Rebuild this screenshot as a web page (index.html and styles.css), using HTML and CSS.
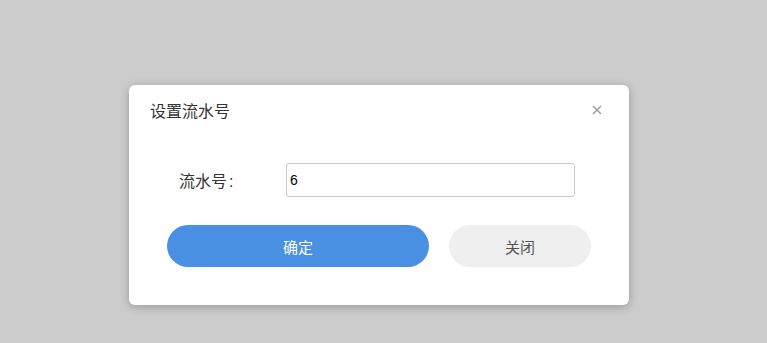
FILE: index.html
```html
<!DOCTYPE html>
<html lang="zh-CN">
  <head>
    <meta charset="UTF-8" />
    <title>设置流水号</title>
    <link rel="stylesheet" href="styles.css">
  </head>
  <body>
    <div class="dialog">
      <div class="dialog-header">
        <span class="dialog-title">设置流水号</span>
        <span class="dialog-close">
          <svg width="10" height="10" viewBox="0 0 10 10">
            <path d="M1 1L9 9M9 1L1 9" stroke="#999" stroke-width="1.4" fill="none" />
          </svg>
        </span>
      </div>
      <div class="form-row">
        <label class="form-label">流水号<span class="colon">:</span></label>
        <input class="form-input" type="text" value="6" />
      </div>
      <div class="dialog-footer">
        <button class="btn btn-primary">确定</button>
        <button class="btn btn-default">关闭</button>
      </div>
    </div>
  </body>
</html>
```

FILE: styles.css
```css
body {
  margin: 0;
  background-color: #cccccc;
  font-family: "Liberation Sans", "Noto Sans CJK SC", sans-serif;
  height: 343px;
  overflow: hidden;
}
.dialog {
  width: 500px;
  height: 220px;
  margin: 85px 0 0 129px;
  background-color: #fff;
  border-radius: 6px;
  box-shadow: 0 2px 10px rgba(0, 0, 0, 0.25);
  box-sizing: border-box;
}
.dialog-header {
  display: flex;
  align-items: center;
  justify-content: space-between;
  height: 50px;
  padding: 0 27px 0 21px;
}
.dialog-title {
  font-size: 16px;
  color: #333;
}
.dialog-close {
  display: flex;
  cursor: pointer;
}
.form-row {
  display: flex;
  align-items: center;
  margin-top: 28px;
  padding-left: 50px;
}
.form-label {
  width: 107px;
  font-size: 16px;
  color: #333;
}
.colon {
  margin-left: 2px;
}
.form-input {
  width: 289px;
  height: 34px;
  box-sizing: border-box;
  border: 1px solid #c8c8c8;
  border-radius: 3px;
  padding: 0 3px;
  font-size: 14px;
  font-family: "Liberation Sans", sans-serif;
  color: #000;
  outline: none;
}
.dialog-footer {
  display: flex;
  gap: 20px;
  padding: 0 38px;
  margin-top: 28px;
}
.btn {
  height: 42px;
  border: none;
  border-radius: 21px;
  font-size: 15px;
  font-family: "Liberation Sans", "Noto Sans CJK SC", sans-serif;
  cursor: pointer;
}
.btn-primary {
  width: 262px;
  background-color: #4a90e2;
  color: #fff;
}
.btn-default {
  width: 142px;
  background-color: #efefef;
  color: #555;
}
```
